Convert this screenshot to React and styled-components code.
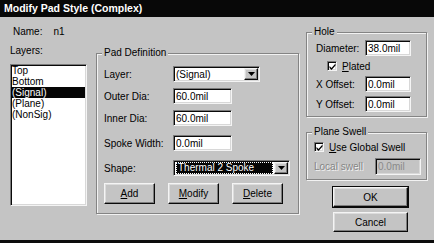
import React from "react";
import styled, { createGlobalStyle, css } from "styled-components";

const GlobalStyle = createGlobalStyle`
  html, body {
    margin: 0;
    padding: 0;
    background: #c4c4c4;
  }
  body {
    font-family: "Liberation Sans", Arial, sans-serif;
    font-size: 10px;
    color: #000;
  }
`;

const raised = css`
  box-sizing: border-box;
  background: #c4c4c4;
  border-top: 1px solid #f4f4f4;
  border-left: 1px solid #f4f4f4;
  border-right: 1px solid #0a0a0a;
  border-bottom: 1px solid #0a0a0a;
  box-shadow: inset -1px -1px 0 #7d7d7d, inset 1px 1px 0 #dcdcdc;
`;

const sunken = css`
  box-sizing: border-box;
  border-top: 1px solid #7a7a7a;
  border-left: 1px solid #7a7a7a;
  border-right: 1px solid #f4f4f4;
  border-bottom: 1px solid #f4f4f4;
  box-shadow: inset 1px 1px 0 #0a0a0a, inset -1px -1px 0 #d8d8d8;
`;

function App() {
  return (
    <>
      <GlobalStyle />
      <Window>
        <TitleBar>Modify Pad Style (Complex)</TitleBar>
        <Body>
          <LeftCol>
            <NameRow>
              <span>Name:</span>
              <span>n1</span>
            </NameRow>
            <LayersLabel>Layers:</LayersLabel>
            <ListBox>
              <ListItem>Top</ListItem>
              <ListItem>Bottom</ListItem>
              <ListItem selected>(Signal)</ListItem>
              <ListItem>(Plane)</ListItem>
              <ListItem>(NonSig)</ListItem>
            </ListBox>
          </LeftCol>

          <MidCol>
            <Group w={203} h={161} pad="12px 0 0 7px">
              <Legend>Pad Definition</Legend>
              <Row>
                <RowLabel w={69}>Layer:</RowLabel>
                <Field w={87}>
                  <FieldText>(Signal)</FieldText>
                  <DropButton><Arrow /></DropButton>
                </Field>
              </Row>
              <Row mt={6}>
                <RowLabel w={69}>Outer Dia:</RowLabel>
                <Field w={59}><FieldText>60.0mil</FieldText></Field>
              </Row>
              <Row mt={6}>
                <RowLabel w={69}>Inner Dia:</RowLabel>
                <Field w={59}><FieldText>60.0mil</FieldText></Field>
              </Row>
              <Row mt={9}>
                <RowLabel w={69}>Spoke Width:</RowLabel>
                <Field w={59}><FieldText>0.0mil</FieldText></Field>
              </Row>
              <Row mt={9}>
                <RowLabel w={69}>Shape:</RowLabel>
                <Field w={117}>
                  <Highlight>Thermal 2 Spoke</Highlight>
                  <DropButton><Arrow /></DropButton>
                </Field>
              </Row>
              <ButtonRow>
                <Button w={51}><u>A</u>dd</Button>
                <Button w={51}><u>M</u>odify</Button>
                <Button w={51}><u>D</u>elete</Button>
              </ButtonRow>
            </Group>
          </MidCol>

          <RightCol>
            <Group w={121} h={85} pad="7px 0 0 9px">
              <Legend>Hole</Legend>
              <Row>
                <RowLabel w={49}>Diameter:</RowLabel>
                <Field w={46}><FieldText>38.0mil</FieldText></Field>
              </Row>
              <CheckRow mt={5} indent={11}>
                <CheckBox><Tick /></CheckBox>
                <span><u>P</u>lated</span>
              </CheckRow>
              <Row mt={5}>
                <RowLabel w={49}>X Offset:</RowLabel>
                <Field w={46}><FieldText>0.0mil</FieldText></Field>
              </Row>
              <Row mt={4}>
                <RowLabel w={49}>Y Offset:</RowLabel>
                <Field w={46}><FieldText>0.0mil</FieldText></Field>
              </Row>
            </Group>

            <Group w={121} h={48} pad="9px 0 0 7px" mt={15}>
              <Legend>Plane Swell</Legend>
              <CheckRow>
                <CheckBox><Tick /></CheckBox>
                <span><u>U</u>se Global Swell</span>
              </CheckRow>
              <Row mt={6} h={17}>
                <RowLabel w={61} disabled>Local swell</RowLabel>
                <Field w={46} h={17} disabled><FieldText>0.0mil</FieldText></Field>
              </Row>
            </Group>

            <DialogButton isDefault mt={7}>OK</DialogButton>
            <DialogButton mt={5}>Cancel</DialogButton>
          </RightCol>
        </Body>
      </Window>
    </>
  );
}

const Arrow = () => (
  <svg width="7" height="4" viewBox="0 0 7 4">
    <path d="M0 0h7L3.5 4z" fill="#000" />
  </svg>
);

const Tick = () => (
  <svg width="7" height="7" viewBox="0 0 7 7">
    <path d="M0.5 3l2 2 4-4.5v2l-4 4.5-2-2z" fill="#000" />
  </svg>
);

const Window = styled.div`
  width: 434px;
  height: 243px;
  box-sizing: border-box;
  background: #c4c4c4;
  border-bottom: 3px solid #0c0c0c;
  display: flex;
  flex-direction: column;
  overflow: hidden;
`;

const TitleBar = styled.div`
  flex: none;
  height: 17px;
  background: #080808;
  color: #fff;
  font-weight: bold;
  font-size: 10.5px;
  line-height: 17px;
  padding-left: 4px;
`;

const Body = styled.div`
  display: flex;
  align-items: flex-start;
  padding-left: 10px;
`;

const LeftCol = styled.div`
  width: 77px;
  flex: none;
  display: flex;
  flex-direction: column;
  padding-top: 9px;
`;

const NameRow = styled.div`
  display: flex;
  gap: 11px;
  padding-left: 3px;
  line-height: 12px;
`;

const LayersLabel = styled.div`
  line-height: 12px;
  margin-top: 7px;
`;

const ListBox = styled.div`
  ${sunken};
  margin-top: 7px;
  height: 142px;
  background: #fff;
  padding-right: 1px;
`;

const ListItem = styled.div`
  height: 11px;
  line-height: 11px;
  padding-left: 1px;
  background: ${p => (p.selected ? "#050505" : "transparent")};
  color: ${p => (p.selected ? "#fff" : "#000")};
`;

const MidCol = styled.div`
  flex: none;
  margin-left: 9px;
  margin-top: 36px;
`;

const RightCol = styled.div`
  flex: none;
  margin-left: 7px;
  margin-top: 15px;
  display: flex;
  flex-direction: column;
`;

const Group = styled.div`
  position: relative;
  box-sizing: border-box;
  width: ${p => p.w}px;
  height: ${p => p.h}px;
  margin-top: ${p => p.mt || 0}px;
  padding: ${p => p.pad};
  border: 1px solid #848484;
  box-shadow: inset 1px 1px 0 #f2f2f2, 1px 1px 0 #f2f2f2;
`;

const Legend = styled.span`
  position: absolute;
  top: -7px;
  left: 5px;
  padding: 0 2px;
  line-height: 12px;
  background: #c4c4c4;
`;

const Row = styled.div`
  display: flex;
  align-items: center;
  height: ${p => p.h || 16}px;
  margin-top: ${p => p.mt || 0}px;
`;

const RowLabel = styled.span`
  flex: none;
  width: ${p => p.w}px;
  white-space: nowrap;
  color: ${p => (p.disabled ? "#858585" : "#000")};
  text-shadow: ${p => (p.disabled ? "1px 1px 0 #f2f2f2" : "none")};
`;

const Field = styled.div`
  ${sunken};
  width: ${p => p.w}px;
  height: ${p => p.h || 16}px;
  background: ${p => (p.disabled ? "#c4c4c4" : "#fff")};
  color: ${p => (p.disabled ? "#8a8a8a" : "#000")};
  display: flex;
  align-items: center;
  padding: 0 1px 0 2px;
`;

const FieldText = styled.span`
  flex: 1;
  white-space: nowrap;
  overflow: hidden;
`;

const Highlight = styled.span`
  flex: 1;
  height: 12px;
  line-height: 12px;
  background: #050505;
  color: #fff;
  padding-left: 2px;
  margin-right: 1px;
  outline: 1px dotted #fff;
  outline-offset: -1px;
  white-space: nowrap;
`;

const DropButton = styled.span`
  ${raised};
  flex: none;
  width: 14px;
  height: 12px;
  display: flex;
  align-items: center;
  justify-content: center;
`;

const ButtonRow = styled.div`
  display: flex;
  gap: 13px;
  margin-top: 7px;
`;

const Button = styled.div`
  ${raised};
  width: ${p => p.w}px;
  height: 21px;
  display: flex;
  align-items: center;
  justify-content: center;
`;

const CheckRow = styled.div`
  display: flex;
  align-items: center;
  gap: 5px;
  height: 10px;
  margin-top: ${p => p.mt || 0}px;
  padding-left: ${p => p.indent || 0}px;
`;

const CheckBox = styled.span`
  ${sunken};
  width: 10px;
  height: 10px;
  background: #fff;
  display: flex;
  align-items: center;
  justify-content: center;
`;

const DialogButton = styled.div`
  ${raised};
  width: 75px;
  height: 20px;
  margin-left: 27px;
  margin-top: ${p => p.mt || 0}px;
  display: flex;
  align-items: center;
  justify-content: center;
  ${p =>
    p.isDefault &&
    css`
      outline: 1px solid #0a0a0a;
    `}
`;

export default App;
